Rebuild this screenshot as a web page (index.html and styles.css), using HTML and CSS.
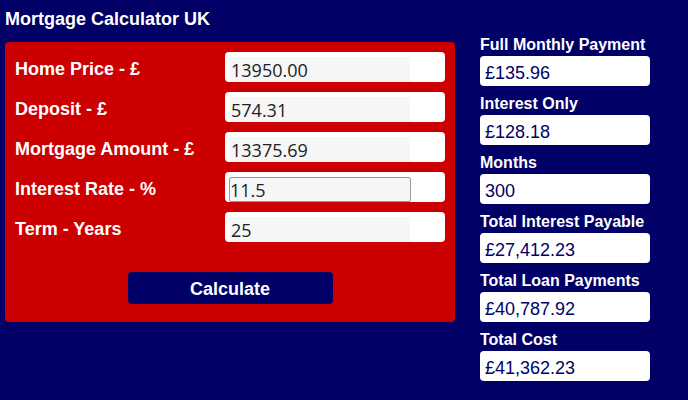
FILE: index.html
```html
<!DOCTYPE html>
<html lang="en">
<head>
<meta charset="utf-8">
<title>Mortgage Calculator UK</title>
<link rel="stylesheet" href="styles.css">
</head>
<body>
<h1 class="title">Mortgage Calculator UK</h1>
<div class="layout">
  <form class="panel">
    <div class="row">
      <label class="label">Home Price - £</label>
      <div class="field"><input class="input" type="text" value="13950.00"></div>
    </div>
    <div class="row">
      <label class="label">Deposit - £</label>
      <div class="field"><input class="input" type="text" value="574.31"></div>
    </div>
    <div class="row">
      <label class="label">Mortgage Amount - £</label>
      <div class="field"><input class="input" type="text" value="13375.69"></div>
    </div>
    <div class="row">
      <label class="label">Interest Rate - %</label>
      <div class="field"><input class="input input-focus" type="text" value="11.5"></div>
    </div>
    <div class="row">
      <label class="label">Term - Years</label>
      <div class="field"><input class="input" type="text" value="25"></div>
    </div>
    <div class="actions">
      <button class="button" type="button">Calculate</button>
    </div>
  </form>
  <div class="results">
    <div class="result">
      <div class="result-label">Full Monthly Payment</div>
      <div class="result-value">£135.96</div>
    </div>
    <div class="result">
      <div class="result-label">Interest Only</div>
      <div class="result-value">£128.18</div>
    </div>
    <div class="result">
      <div class="result-label">Months</div>
      <div class="result-value">300</div>
    </div>
    <div class="result">
      <div class="result-label">Total Interest Payable</div>
      <div class="result-value">£27,412.23</div>
    </div>
    <div class="result">
      <div class="result-label">Total Loan Payments</div>
      <div class="result-value">£40,787.92</div>
    </div>
    <div class="result">
      <div class="result-label">Total Cost</div>
      <div class="result-value">£41,362.23</div>
    </div>
  </div>
</div>
</body>
</html>
```
FILE: styles.css
```css
html, body {
  margin: 0;
  padding: 0;
  background: #000066;
  height: 100%;
}
body {
  padding: 9px 5px 0 5px;
  box-sizing: border-box;
  font-family: "Liberation Sans", Arial, sans-serif;
  color: #ffffff;
}
.title {
  margin: 0 0 6px 0;
  font-size: 18px;
  line-height: 20px;
  font-weight: bold;
}
.layout {
  display: flex;
  align-items: flex-start;
  gap: 25px;
}
.panel {
  margin: 7px 0 0 0;
  width: 450px;
  box-sizing: border-box;
  background: #cc0000;
  border-radius: 4px;
  padding: 10px 10px 18px 10px;
  display: flex;
  flex-direction: column;
  gap: 10px;
}
.row {
  display: flex;
  height: 30px;
}
.label {
  width: 210px;
  padding-top: 7px;
  font-size: 18px;
  line-height: 20px;
  font-weight: bold;
  color: #ffffff;
}
.field {
  width: 220px;
  height: 30px;
  box-sizing: border-box;
  background: #ffffff;
  border-radius: 4px;
  padding: 5px 0 0 5px;
}
.input {
  display: block;
  width: 180px;
  height: 25px;
  box-sizing: border-box;
  margin: 0;
  border: none;
  padding: 0 0 0 1px;
  background: #f6f6f6;
  font-family: "Open Sans", "Noto Sans", sans-serif;
  font-size: 18px;
  color: #222222;
  outline: none;
}
.input-focus {
  margin-left: -1px;
  width: 182px;
  border: 1px solid #9a9a9a;
  border-radius: 2px;
  padding: 0;
}
.actions {
  display: flex;
  justify-content: center;
  padding-top: 20px;
}
.button {
  width: 205px;
  height: 32px;
  background: #000066;
  color: #ffffff;
  border: none;
  border-radius: 4px;
  font-family: "Liberation Sans", Arial, sans-serif;
  font-size: 18px;
  font-weight: bold;
  padding: 3px 0 0 0;
}
.results {
  display: flex;
  flex-direction: column;
  gap: 8px;
}
.result-label {
  font-size: 16px;
  line-height: 19px;
  font-weight: bold;
  margin-bottom: 2px;
}
.result-value {
  width: 170px;
  height: 30px;
  box-sizing: border-box;
  background: #ffffff;
  border-radius: 4px;
  padding: 4px 0 0 5px;
  font-size: 18px;
  line-height: 26px;
  color: #000066;
}
```
